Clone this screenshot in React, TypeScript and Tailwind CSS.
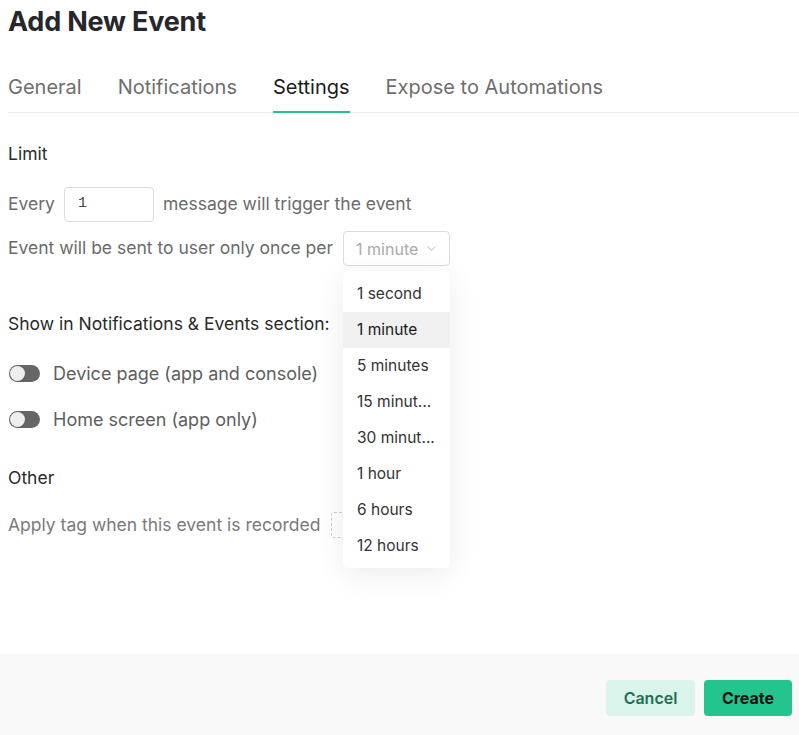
import { ChevronDown } from "lucide-react";

const tabs = ["General", "Notifications", "Settings", "Expose to Automations"];
const options = ["1 second", "1 minute", "5 minutes", "15 minut...", "30 minut...", "1 hour", "6 hours", "12 hours"];

function Toggle() {
  return (
    <div className="w-[31px] h-[17px] rounded-full bg-[#666] relative shrink-0 ml-px">
      <div className="absolute left-[1px] top-[1px] w-[15px] h-[15px] rounded-full bg-[#eee] shadow" />
    </div>
  );
}

export default function App() {
  return (
    <div className="w-[799px] h-[735px] bg-white flex flex-col font-['Inter',sans-serif] relative overflow-hidden">
      <div className="flex-1 px-2">
        {/* Title */}
        <h1 className="text-[27px] leading-[32px] font-bold text-[#26262b] pt-[6px] tracking-[-0.2px]">Add New Event</h1>

        {/* Tabs */}
        <div className="mt-[37px] flex gap-[36px] border-b border-[#ebebeb] mr-[-8px]">
          {tabs.map((t) => (
            <div
              key={t}
              className={
                "text-[20px] leading-[24px] pb-[12px] -mb-px border-b-2 " +
                (t === "Settings" ? "text-[#1c1c1c] border-[#22c38e]" : "text-[#6e6e6e] border-transparent")
              }
            >
              {t}
            </div>
          ))}
        </div>

        {/* Limit */}
        <div className="mt-[31px] text-[17.5px] leading-[20px] text-[#2a2a2a]">Limit</div>
        <div className="mt-[23px] flex items-center gap-[9px] text-[17.5px] text-[#6b6b6b]">
          <span>Every</span>
          <div className="w-[90px] h-[35px] border border-[#dcdcdc] rounded-[4px] flex items-center px-[13px] font-['Liberation_Mono',monospace] text-[15px] text-[#444]">1</div>
          <span>message will trigger the event</span>
        </div>
        <div className="mt-[9px] flex items-center gap-[10px] text-[17.5px] text-[#6b6b6b]">
          <span>Event will be sent to user only once per</span>
          <div className="w-[107px] h-[35px] border border-[#dcdcdc] rounded-[4px] flex items-center pl-[12px] gap-[6px] text-[16px] text-[#aaa]">
            <span>1 minute</span>
            <ChevronDown size={15} strokeWidth={1.3} />
          </div>
        </div>

        {/* Show in */}
        <div className="mt-[48px] text-[17.5px] leading-[20px] text-[#2a2a2a]">Show in Notifications &amp; Events section:</div>
        <div className="mt-[26px] flex items-center gap-[13px] text-[18px] text-[#5e5e5e]">
          <Toggle />
          <span>Device page (app and console)</span>
        </div>
        <div className="mt-[19px] flex items-center gap-[13px] text-[18px] text-[#5e5e5e]">
          <Toggle />
          <span>Home screen (app only)</span>
        </div>

        {/* Other */}
        <div className="mt-[35px] text-[17.5px] leading-[20px] text-[#2a2a2a]">Other</div>
        <div className="mt-[24px] flex items-center gap-[11px] text-[17.5px] text-[#7a7a7a]">
          <span>Apply tag when this event is recorded</span>
          <div className="w-[40px] h-[26px] border border-dashed border-[#ccc] rounded-[3px]" />
        </div>
      </div>

      {/* Footer */}
      <div className="h-[81px] bg-[#f9f9f9] flex items-center justify-end gap-[9px] px-[7px] pt-[6px]">
        <button className="w-[89px] h-[36px] rounded-[4px] bg-[#dbf4eb] text-[#1d6f52] text-[16px] font-semibold">Cancel</button>
        <button className="w-[88px] h-[36px] rounded-[4px] bg-[#24c48e] text-[#111] text-[16px] font-bold">Create</button>
      </div>

      {/* Dropdown menu */}
      <div className="absolute left-[343px] top-[271px] w-[107px] pt-[5px] pb-[4px] bg-white rounded-[5px] shadow-[0_6px_30px_rgba(0,0,0,0.08)]">
        {options.map((o) => (
          <div
            key={o}
            className={
              "h-[36px] flex items-center px-[14px] text-[15.5px] whitespace-nowrap overflow-hidden " +
              (o === "1 minute" ? "bg-[#f0f0f0] text-[#1a1a1a]" : "text-[#333]")
            }
          >
            {o}
          </div>
        ))}
      </div>
    </div>
  );
}
